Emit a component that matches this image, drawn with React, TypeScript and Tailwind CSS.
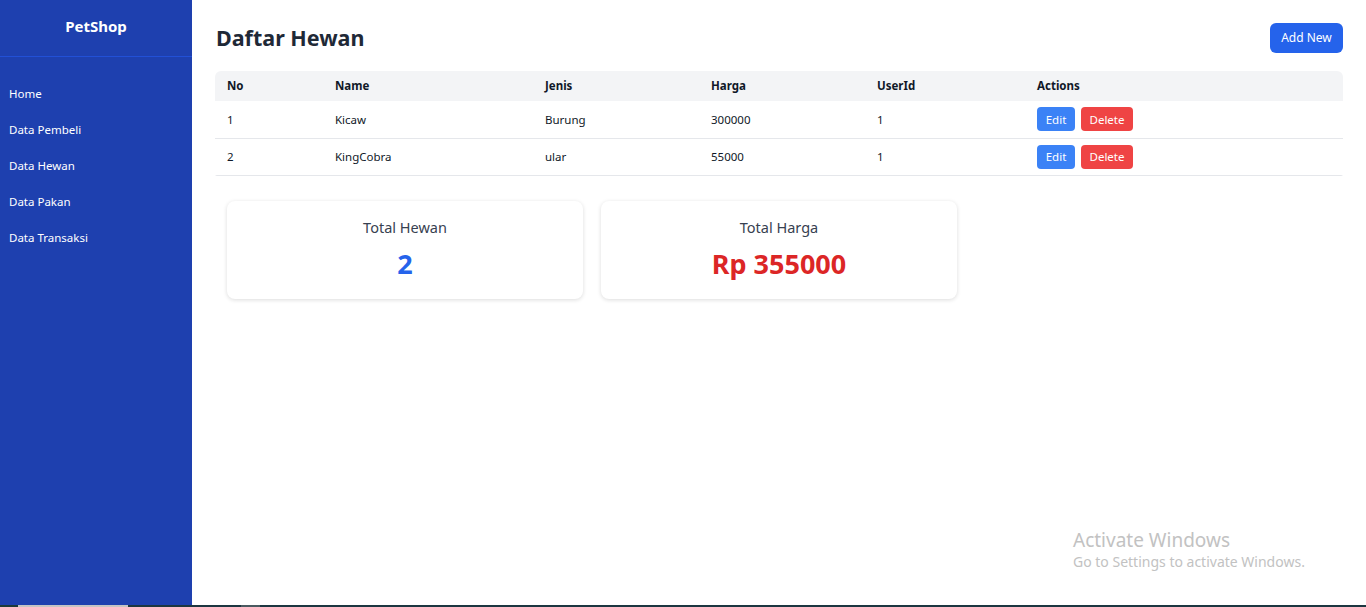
import React from "react";

type Hewan = { no: number; name: string; jenis: string; harga: number; userId: number };

const hewan: Hewan[] = [
  { no: 1, name: "Kicaw", jenis: "Burung", harga: 300000, userId: 1 },
  { no: 2, name: "KingCobra", jenis: "ular", harga: 55000, userId: 1 },
];

const menu = ["Home", "Data Pembeli", "Data Hewan", "Data Pakan", "Data Transaksi"];

function Sidebar() {
  return (
    <aside className="w-[192px] shrink-0 bg-[#1e40af] text-white">
      <div className="h-[57px] flex items-center justify-center border-b border-[#2250d6] pb-[3px]">
        <span className="text-[15px] font-bold">PetShop</span>
      </div>
      <ul className="pt-[19px]">
        {menu.map((m) => (
          <li key={m} className="h-9 flex items-center px-[9px] text-[11.5px]">
            {m}
          </li>
        ))}
      </ul>
    </aside>
  );
}

function HewanTable() {
  const td = "pl-3 border-b border-[#e5e7eb]";
  return (
    <div className="rounded-t-md rounded-b-[2px] overflow-hidden -ml-px">
      <table className="w-full text-[11.5px] text-left text-gray-900 border-collapse">
        <thead className="bg-[#f3f4f6]">
          <tr className="h-[30px]">
            <th className="w-[108px] pl-3 font-bold">No</th>
            <th className="w-[210px] pl-3 font-bold">Name</th>
            <th className="w-[166px] pl-3 font-bold">Jenis</th>
            <th className="w-[166px] pl-3 font-bold">Harga</th>
            <th className="w-[160px] pl-3 font-bold">UserId</th>
            <th className="pl-3 font-bold">Actions</th>
          </tr>
        </thead>
        <tbody>
          {hewan.map((h) => (
            <tr key={h.no} className="h-[37px]">
              <td className={td}>{h.no}</td>
              <td className={td}>{h.name}</td>
              <td className={td}>{h.jenis}</td>
              <td className={td}>{h.harga}</td>
              <td className={td}>{h.userId}</td>
              <td className={td}>
                <div className="flex gap-[6px]">
                  <button className="h-6 w-[38px] rounded bg-[#3b82f6] text-white text-[11.5px]">Edit</button>
                  <button className="h-6 w-[52px] rounded bg-[#ef4444] text-white text-[11.5px]">Delete</button>
                </div>
              </td>
            </tr>
          ))}
        </tbody>
      </table>
    </div>
  );
}

function StatCard({ label, value, color }: { label: string; value: string; color: string }) {
  return (
    <div className="h-[98px] rounded-lg bg-white shadow-[0_1px_4px_rgba(0,0,0,0.14)] flex flex-col items-center pt-4">
      <div className="text-[14.5px] text-[#374151]">{label}</div>
      <div className={`mt-[10px] text-[27px] leading-8 font-bold ${color}`}>{value}</div>
    </div>
  );
}

export default function App() {
  const totalHarga = hewan.reduce((s, h) => s + h.harga, 0);
  return (
    <div className="relative h-[607px] w-[1366px] overflow-hidden bg-white flex flex-col" style={{ fontFamily: '"Noto Sans", "Open Sans", sans-serif' }}>
      <div className="flex flex-1">
        <Sidebar />
        <main className="flex-1 pl-6 pr-[23px] pt-[23px]">
          <div className="flex items-start justify-between h-[48px]">
            <h1 className="text-[21.5px] font-bold text-[#1f2937] leading-[32px] -mt-px">Daftar Hewan</h1>
            <button className="h-[30px] w-[73px] rounded-md bg-[#2563eb] text-white text-[12px]">Add New</button>
          </div>
          <HewanTable />
          <div className="grid grid-cols-3 gap-[18px] pl-[11px] pr-3 mt-[25px]">
            <StatCard label="Total Hewan" value={String(hewan.length)} color="text-[#2563eb]" />
            <StatCard label="Total Harga" value={`Rp ${totalHarga}`} color="text-[#dc2626]" />
          </div>
        </main>
      </div>
      <div className="h-[2px] flex">
        <div className="w-[18px] bg-[#1c3a3a]" />
        <div className="w-[110px] bg-[#c4c4c4]" />
        <div className="w-[113px] bg-[#1c3640]" />
        <div className="w-[19px] bg-[#4a5a60]" />
        <div className="flex-1 bg-[#1c3640]" />
      </div>
      <div className="absolute left-[1073px] top-[528px] text-[#c2c2c2] pointer-events-none">
        <div className="text-[19px] leading-6">Activate Windows</div>
        <div className="text-[14px] leading-5">Go to Settings to activate Windows.</div>
      </div>
    </div>
  );
}
